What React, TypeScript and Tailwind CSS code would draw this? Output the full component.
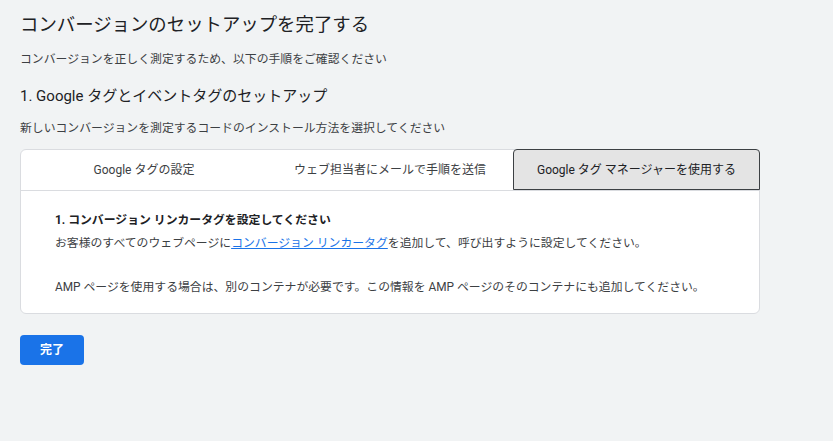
export default function App() {
  return (
    <div
      className="min-h-[441px] w-full bg-[#f1f3f4] px-5 pt-[11px] text-[#202124]"
      style={{ fontFamily: 'Roboto, "Noto Sans CJK JP", "Noto Sans", sans-serif' }}
    >
      <h1 className="text-[18.4px] leading-[28px] font-normal">コンバージョンのセットアップを完了する</h1>
      <p className="mt-[11px] text-[11.85px] leading-[18px] text-[#3c4043]">
        コンバージョンを正しく測定するため、以下の手順をご確認ください
      </p>
      <h2 className="mt-[16px] text-[15px] leading-[24px] font-normal">1. Google タグとイベントタグのセットアップ</h2>
      <p className="mt-[11px] text-[11.85px] leading-[18px] text-[#3c4043]">
        新しいコンバージョンを測定するコードのインストール方法を選択してください
      </p>

      <div className="mt-[12px] w-[740px] rounded-[6px] border border-[#dadce0] bg-white">
        <div className="grid h-[41px] grid-cols-3 border-b border-[#dadce0] text-[12px]">
          <button className="flex items-center justify-center text-[#3c4043]">Google タグの設定</button>
          <button className="flex items-center justify-center text-[#3c4043]">ウェブ担当者にメールで手順を送信</button>
          <button className="-mt-px -mr-px flex items-center justify-center rounded-t-[4px] border border-[#3c4043] bg-[#e4e4e4] text-[#202124]">
            Google タグ マネージャーを使用する
          </button>
        </div>
        <div className="px-[34px] pt-[20px] pb-[17px] text-[11.85px] leading-[18px]">
          <p className="font-bold text-[#202124]">1. コンバージョン リンカータグを設定してください</p>
          <p className="mt-[5px] text-[#3c4043]">
            お客様のすべてのウェブページに
            <a href="#" className="text-[#1a73e8] underline">
              コンバージョン リンカータグ
            </a>
            を追加して、呼び出すように設定してください。
          </p>
          <p className="mt-[26px] text-[#3c4043]">
            AMP ページを使用する場合は、別のコンテナが必要です。この情報を AMP ページのそのコンテナにも追加してください。
          </p>
        </div>
      </div>

      <button className="mt-[21px] h-[30px] w-[64px] rounded-[4px] bg-[#1a73e8] text-[12px] font-bold text-white">
        完了
      </button>
    </div>
  );
}
